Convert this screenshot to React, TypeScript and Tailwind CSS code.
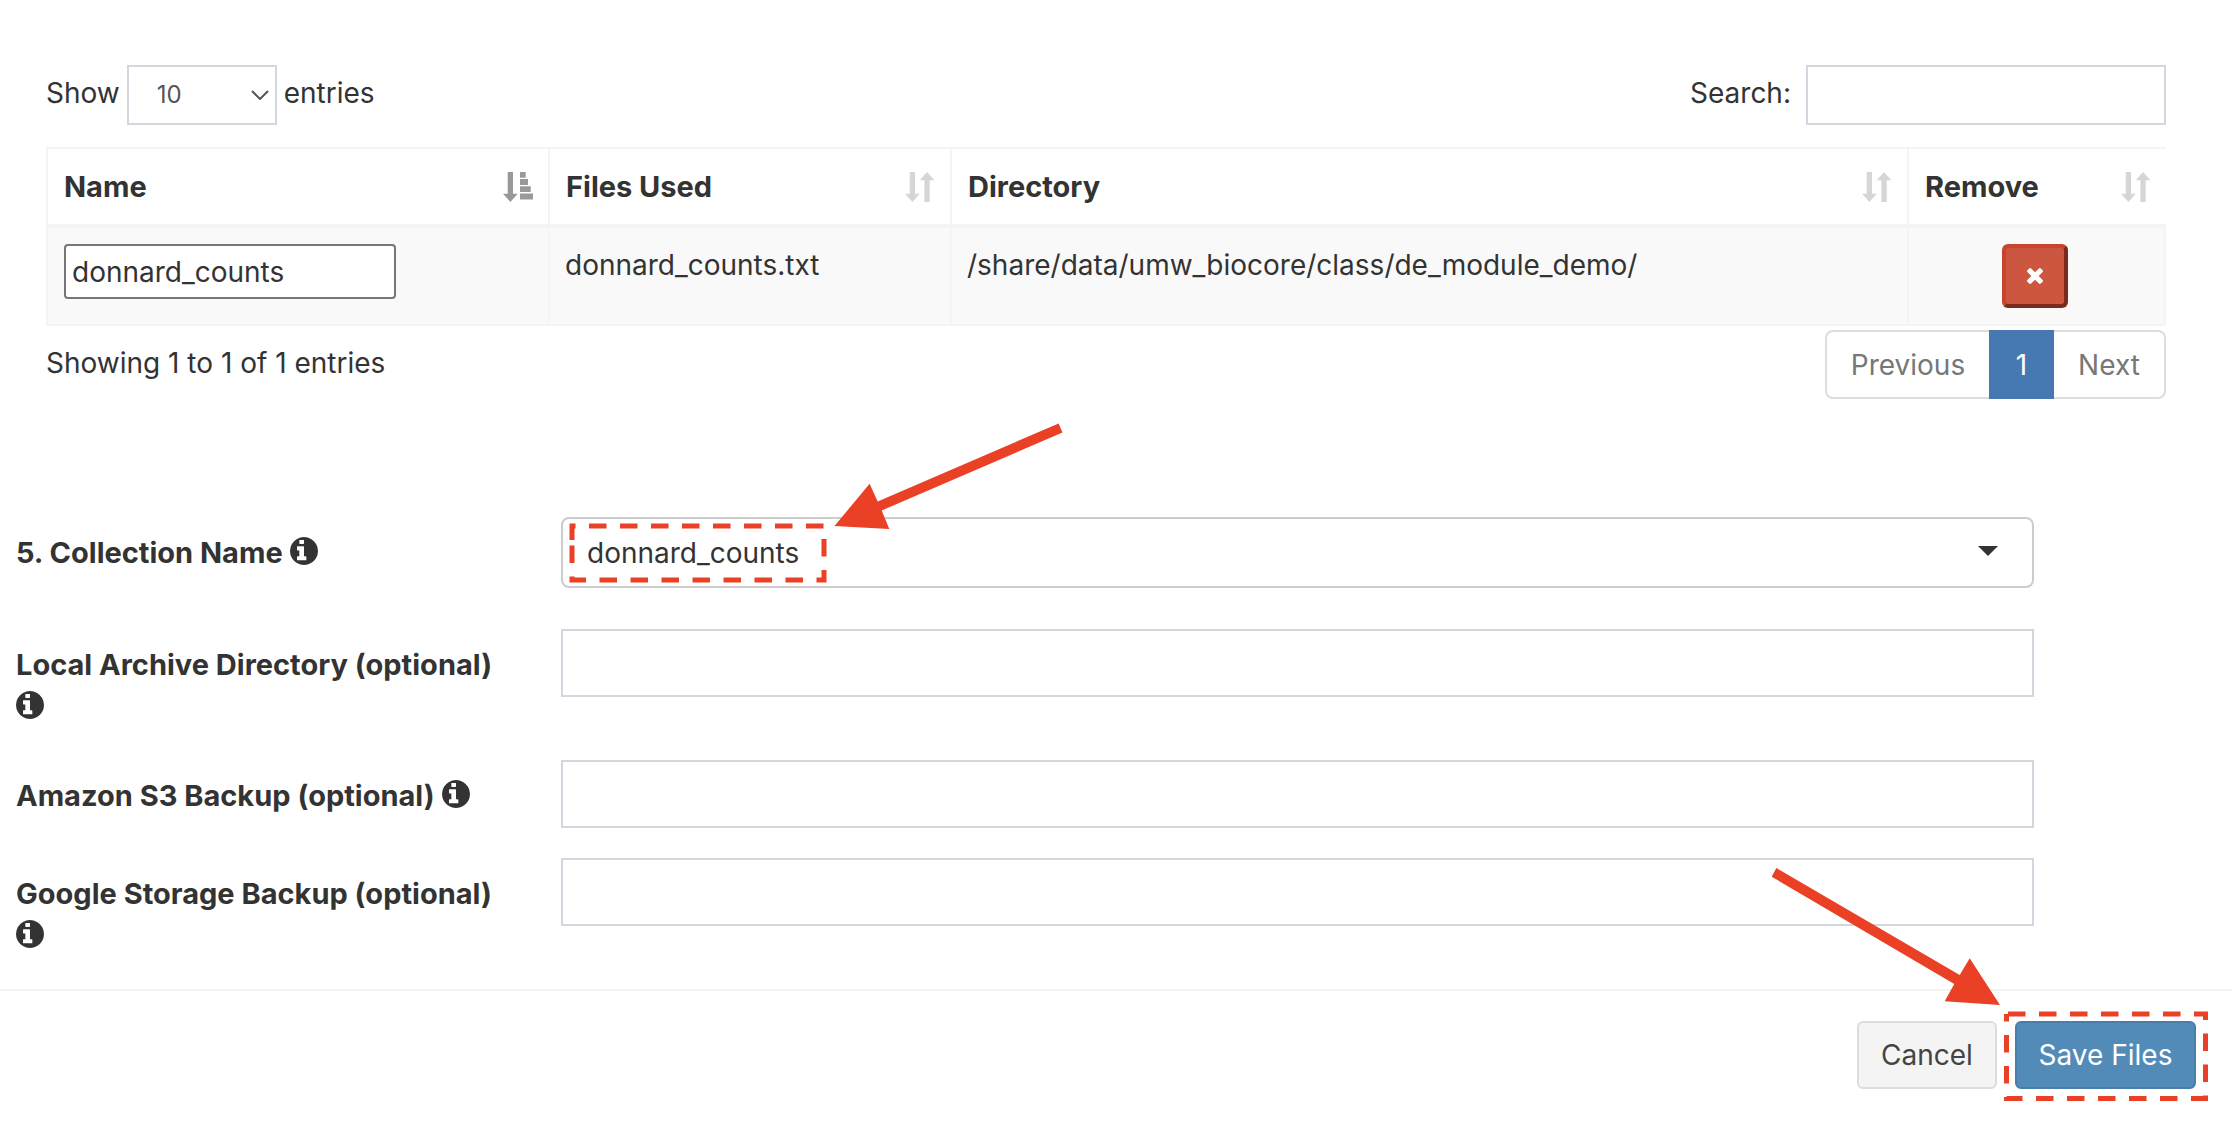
import type { ReactNode } from "react";

function InfoIcon() {
  return (
    <svg viewBox="128 128 1536 1536" className="-mt-2 inline-block size-7 fill-current align-middle" aria-hidden="true">
      <path d="M1024 1376v-160q0-14-9-23t-23-9h-96v-512q0-14-9-23t-23-9h-320q-14 0-23 9t-9 23v160q0 14 9 23t23 9h96v320h-96q-14 0-23 9t-9 23v160q0 14 9 23t23 9h448q14 0 23-9t9-23zM896 480v-160q0-14-9-23t-23-9h-192q-14 0-23 9t-9 23v160q0 14 9 23t23 9h192q14 0 23-9t9-23zM1664 896q0 209-103 385.5t-279.5 279.5-385.5 103-385.5-103-279.5-279.5-103-385.5 103-385.5 279.5-279.5 385.5-103 385.5 103 279.5 279.5 103 385.5z" />
    </svg>
  );
}

function SortIcon() {
  return (
    <svg viewBox="0 0 30 30" className="size-[30px] fill-[#d6d6d6]" aria-hidden="true">
      <path d="M4.7 0h5.3v21.7h4.7L7.4 30 0 21.7h4.7zM19.4 30h5.3V8.3h4.7L22 0l-7.3 8.3h4.7z" />
    </svg>
  );
}

function SortAscIcon() {
  return (
    <svg viewBox="0 0 30 30" className="size-[30px] fill-[#999]" aria-hidden="true">
      <path d="M4.7 0h5.3v21.7h4.7L7.4 30 0 21.7h4.7zM17 0h5.7v5.8H17zM17 7h8v6h-8zM17 14.3h10.7v5.8H17zM17 21.6h13v5.8H17z" />
    </svg>
  );
}

function HeadCell({ title, icon, className = "" }: { title: string; icon: ReactNode; className?: string }) {
  return (
    <th scope="col" className={"h-[75px] border-l-2 border-[#f4f4f4] pr-[15px] pl-4 text-left text-[29px] " + className}>
      <button type="button" className="flex w-full items-center justify-between font-bold">
        {title}
        {icon}
      </button>
    </th>
  );
}

function FormRow({ id, label, className, children }: { id: string; label: string; className: string; children: ReactNode }) {
  return (
    <div className={"grid grid-cols-[545px_minmax(0,1fr)] " + className}>
      <label htmlFor={id} className="pt-[15px] pr-12 text-[29px] font-bold">
        {label} <InfoIcon />
      </label>
      {children}
    </div>
  );
}

const fieldClass = "h-[68px] w-full border-2 border-[#d2d6de] bg-white px-6";

export default function App() {
  return (
    <div className="min-h-screen overflow-hidden bg-white pt-[65px] font-['Inter',sans-serif] text-[28px] leading-[42px] text-[#333]">
      <section className="pr-[66px] pl-[46px]">
        <div className="flex justify-between">
          <div className="flex gap-[7px]">
            <label htmlFor="length" className="pt-[7px]">Show</label>
            <div className="relative">
              <select id="length" className="h-[60px] w-[150px] appearance-none border-2 border-[#d2d6de] bg-white pl-7 text-2xl text-[#555]">
                <option>10</option>
              </select>
              <svg viewBox="0 0 18 10" className="pointer-events-none absolute top-[25px] right-2 h-[10px] w-[18px] fill-none stroke-[#555] stroke-2" aria-hidden="true">
                <path d="M1 1l8 8 8-8" />
              </svg>
            </div>
            <span className="pt-[7px]">entries</span>
          </div>
          <div className="flex gap-[15px]">
            <label htmlFor="search" className="pt-[7px]">Search:</label>
            <input id="search" type="search" className="h-[60px] w-[360px] border-2 border-[#d2d6de] px-5" />
          </div>
        </div>

        <table className="mt-[22px] w-full table-fixed border-separate border-spacing-0 border-t-2 border-[#f4f4f4]">
          <thead>
            <tr>
              <HeadCell title="Name" icon={<SortAscIcon />} className="w-[502px]" />
              <HeadCell title="Files Used" icon={<SortIcon />} className="w-[402px]" />
              <HeadCell title="Directory" icon={<SortIcon />} />
              <HeadCell title="Remove" icon={<SortIcon />} className="w-[259px]" />
            </tr>
          </thead>
          <tbody className="bg-[#f9f9f9]">
            <tr>
              <td className="h-[102px] border-t-4 border-b-2 border-l-2 border-[#f4f4f4] pt-4 pl-4 align-top">
                <input
                  aria-label="Name"
                  defaultValue="donnard_counts"
                  className="block h-[55px] w-[332px] rounded-[4px] border-2 border-[#767676] bg-white px-[6px]"
                />
              </td>
              <td className="border-t-4 border-b-2 border-l-2 border-[#f4f4f4] pt-4 pl-[15px] align-top">donnard_counts.txt</td>
              <td className="border-t-4 border-b-2 border-l-2 border-[#f4f4f4] pt-4 pl-[15px] align-top">
                /share/data/umw_biocore/class/de_module_demo/
              </td>
              <td className="border-2 border-t-4 border-[#f4f4f4] pt-4 pr-1 align-top">
                <button
                  type="button"
                  aria-label="Remove"
                  className="mx-auto flex h-16 w-[66px] items-center justify-center rounded-md border-4 border-t-[#c9442f] border-r-[#7b291c] border-b-[#7b291c] border-l-[#c9442f] bg-[#cd5641]"
                >
                  <svg viewBox="302 366 1188 1188" className="size-4 fill-white" aria-hidden="true">
                    <path d="M1490 1322q0 40-28 68l-136 136q-28 28-68 28t-68-28l-294-294-294 294q-28 28-68 28t-68-28l-136-136q-28-28-28-68t28-68l294-294-294-294q-28-28-28-68t28-68l136-136q28-28 68-28t68 28l294 294 294-294q28-28 68-28t68 28l136 136q28 28 28 68t-28 68l-294 294 294 294q28 28 28 68z" />
                  </svg>
                </button>
              </td>
            </tr>
          </tbody>
        </table>

        <div className="flex justify-between pt-1">
          <p className="pt-3">Showing 1 to 1 of 1 entries</p>
          <nav aria-label="Pages" className="flex h-[69px] text-[#777]">
            <button type="button" className="w-[164px] rounded-l-lg border-2 border-r-0 border-[#ddd]">Previous</button>
            <button type="button" aria-current="page" className="w-[65px] bg-[#4679b2] text-white">1</button>
            <button type="button" className="w-28 rounded-r-lg border-2 border-l-0 border-[#ddd]">Next</button>
          </nav>
        </div>
      </section>

      <form className="mt-[118px]">
        <div className="pr-[198px] pl-4">
          <FormRow id="collection" label="5. Collection Name" className="h-28">
            <div className="relative">
              <select id="collection" className="h-[71px] w-full appearance-none rounded-lg border-2 border-[#ccc] bg-white px-6">
                <option>donnard_counts</option>
              </select>
              <svg viewBox="0 0 20 10" className="pointer-events-none absolute top-[29px] right-9 h-[10px] w-5 fill-[#333]" aria-hidden="true">
                <path d="M0 0h20L10 10z" />
              </svg>
              <svg viewBox="561 418 510 180" className="pointer-events-none absolute -top-[100px] left-0 h-[180px] w-[510px]" aria-hidden="true">
                <path d="M572 541V527H824V581H572V541" fill="none" stroke="#ea4025" strokeWidth="5" strokeDasharray="17.5 13.5" />
                <path d="M834.5 527L869.6 484.7L877.7 502.5L1058.6 424.5L1062.5 433.5L881.7 511.5L889.3 530Z" fill="#ea4025" />
              </svg>
            </div>
          </FormRow>
          <FormRow id="archive" label="Local Archive Directory (optional)" className="h-[131px]">
            <input id="archive" className={fieldClass} />
          </FormRow>
          <FormRow id="amazon" label="Amazon S3 Backup (optional)" className="h-[98px]">
            <input id="amazon" className={fieldClass} />
          </FormRow>
          <FormRow id="google" label="Google Storage Backup (optional)" className="h-[131px]">
            <input id="google" className={fieldClass} />
          </FormRow>
        </div>
        <footer className="flex justify-end gap-[18px] border-t-2 border-[#f4f4f4] pt-[30px] pr-9">
          <button type="button" className="h-[68px] w-[140px] rounded-md border-2 border-[#ddd] bg-[#f4f4f4] text-[#444]">Cancel</button>
          <div className="relative">
            <button type="button" className="h-[68px] w-[181px] rounded-md border-2 border-[#4a7daa] bg-[#538bb8] text-white">Save Files</button>
            <svg viewBox="1762 862 450 244" className="pointer-events-none absolute -top-40 -right-4 h-[244px] w-[450px] max-w-none" aria-hidden="true">
              <path d="M2008 1015H2205.5V1099.5H2006.5V1015" fill="none" stroke="#ea4025" strokeWidth="5" strokeDasharray="17.5 13.5" />
              <path d="M2000 1006L1969.7 959.3L1959.7 976L1776.3 869L1771.7 877.7L1954.3 985L1944.7 1002.3Z" fill="#ea4025" />
            </svg>
          </div>
        </footer>
      </form>
    </div>
  );
}
